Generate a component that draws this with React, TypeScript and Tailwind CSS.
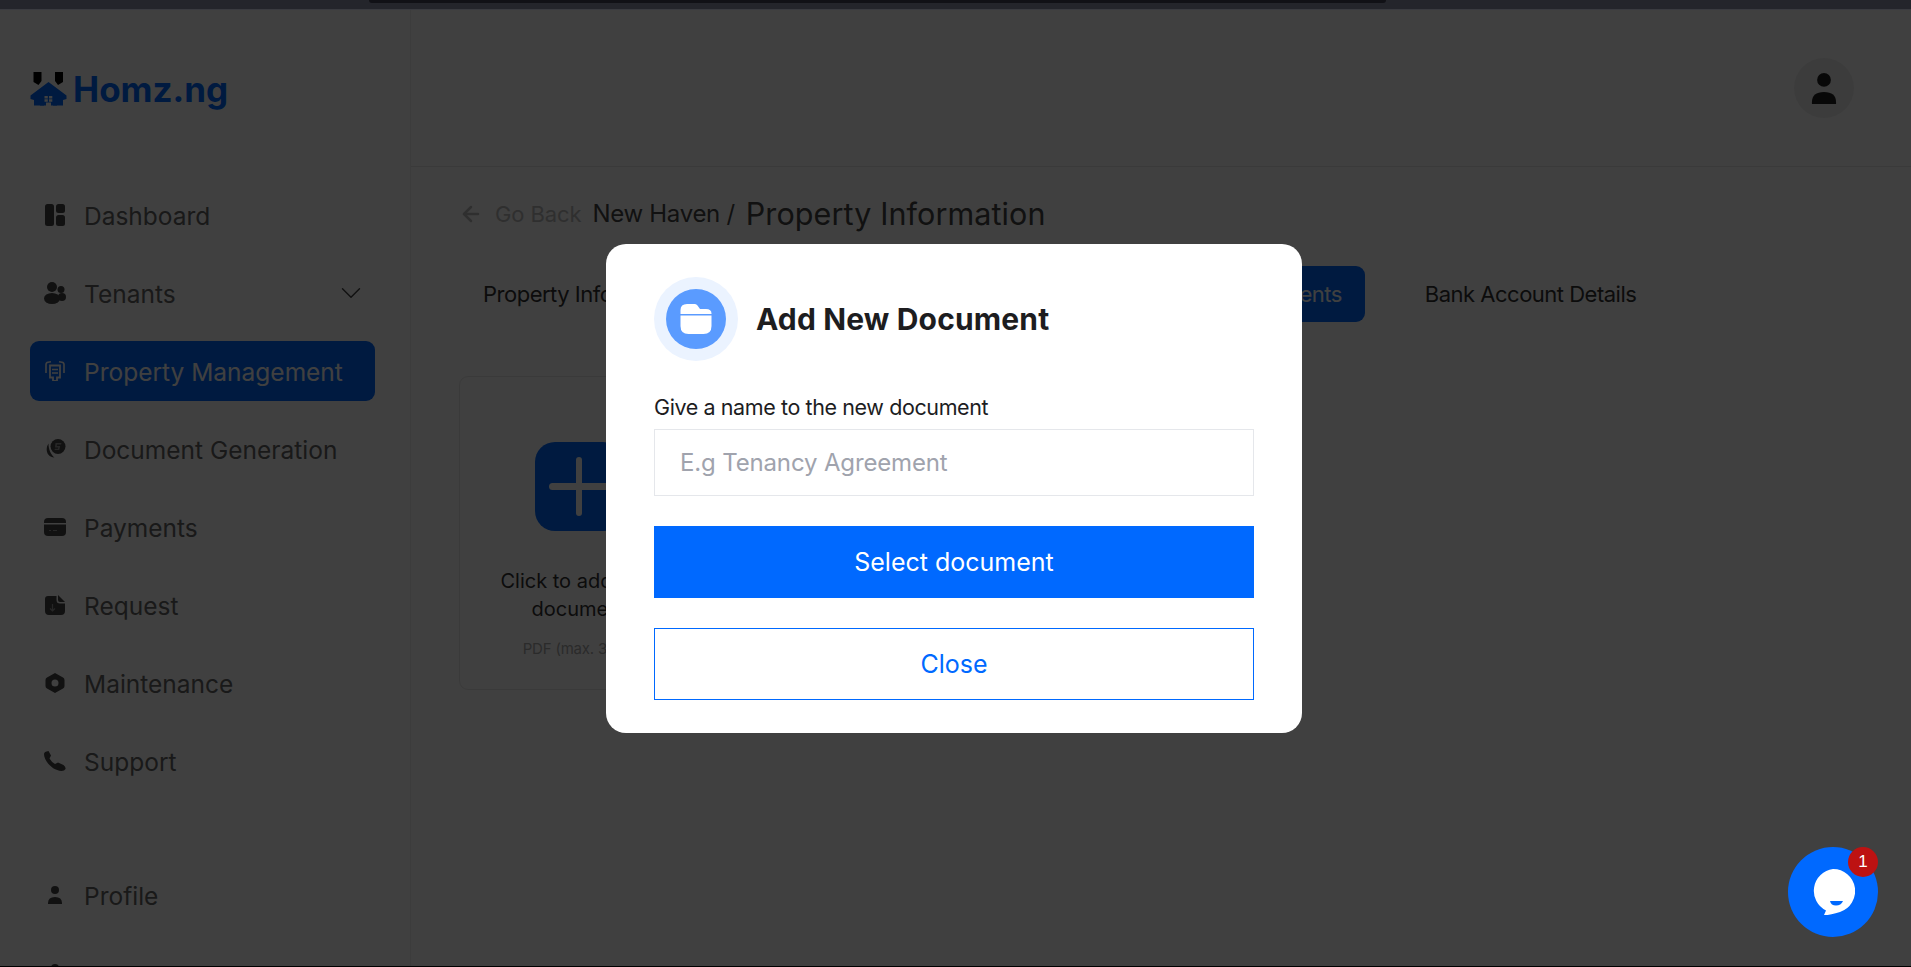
import { ArrowLeft, ChevronDown } from "lucide-react";

const Logo = () => (
  <svg width="37" height="34" viewBox="0 0 37 34">
    <path d="M3.500 0h8v9l-3 4-5-3zM33 0h-8v9l3 4 5-3z" fill="#000" />
    <path d="M18.500 10 0.500 23.500v3.500l3.500 1v5.500h10v-8h9v8h10V28l3.500-1v-3.500z" fill="#0069ff" />
    <path d="M10 33.500V23l8.500-7 8.500 7v10.500h-6v-3H16v3z" fill="#0069ff" />
    <path d="M14.500 24h3.300v2.500h-3.300zM19 24h3.300v2.500H19zM14.500 27.300h3.300v2.500h-3.300zM19 27.300h3.300v2.500H19z" fill="#fff" />
  </svg>
);

const DashIcon = () => (
  <svg width="20" height="22" viewBox="0 0 20 22" fill="#444">
    <rect x="0" y="0" width="9" height="22" rx="2.500" />
    <rect x="11" y="0" width="9" height="9" rx="2.500" />
    <rect x="11" y="11" width="9" height="11" rx="2.500" />
  </svg>
);

const TenantsIcon = () => (
  <svg width="22" height="22" viewBox="0 0 22 22" fill="#444">
    <circle cx="8" cy="5" r="5" />
    <circle cx="17" cy="7.500" r="3.500" />
    <ellipse cx="18" cy="15" rx="4" ry="4" />
    <ellipse cx="8" cy="16.500" rx="8" ry="5.500" />
  </svg>
);

const PropertyIcon = () => (
  <svg width="20" height="20" viewBox="0 0 20 20" fill="none" stroke="#fff" strokeWidth="1.600">
    <path d="M1 12V3.500Q1 1.500 3 1.200L6 .8M19 12V3.500Q19 1.500 17 1.200L14 .8" />
    <path d="M5 4.500h10v12h-3V20H8v-3.500H5z" strokeWidth="1.800" />
    <path d="M7 8.500h6M7 12h6" strokeWidth="1.500" />
  </svg>
);

const DocGenIcon = () => (
  <svg width="20" height="20" viewBox="0 0 20 20" fill="#444" className="translate-x-[1px]">
    <circle cx="12" cy="7.500" r="7.500" />
    <path d="M9.500 4h6l-.5 1.500h-4l-.3 1.500h3.500l-1 4H8.500l.4-1.300h3l.3-1.300H9z" fill="#999" />
    <path d="M2.500 4.500C0 8 .2 13 2.500 15.800c1.500 1.800 3.500 2.700 6 2.700C5 16 2.500 10.500 2.500 4.500z" />
  </svg>
);

const PaymentIcon = () => (
  <svg width="22" height="18" viewBox="0 0 22 18" fill="#444">
    <path d="M4 0h14q4 0 4 4v1H0V4q0-4 4-4z" />
    <path d="M0 6.500h22V14q0 4-4 4H4q-4 0-4-4z" />
    <path d="M5 12.500h2M9 12.500h4" stroke="#999" strokeWidth="1" />
  </svg>
);

const RequestIcon = () => (
  <svg width="20" height="20" viewBox="0 0 20 20" fill="#444">
    <path d="M3 1h8.500v4q0 3.500 3.500 3.500h5V16q0 4-4 4H4q-4 0-4-4V4q0-3 3-3z" />
    <path d="M13 0l7 7h-5q-2 0-2-2z" />
    <path d="M7.500 9v7M5 13.500l2.500 2.500 2.500-2.500" stroke="#999" strokeWidth="1.200" fill="none" />
  </svg>
);

const MaintenanceIcon = () => (
  <svg width="20" height="20" viewBox="0 0 20 20" fill="#444">
    <path fillRule="evenodd" d="M10 0l8 4.500q1.500.8 1.500 2.500v6q0 1.700-1.500 2.500L10 20l-8-4.500Q.5 14.700.5 13V7q0-1.700 1.500-2.500zM10 6.500a3.500 3.500 0 1 0 0 7 3.500 3.500 0 0 0 0-7z" />
  </svg>
);

const PhoneIcon = () => (
  <svg width="22" height="20" viewBox="0 0 22 20" fill="#444">
    <path d="M4.500 0 7 4.500 5.500 7.500q2 3.500 5.500 5.500l3-1.500 5.500 2.500q2.500 2 2 4-1 2-4 2C8.500 19.500 0 10 0 3q0-2.500 4.500-3z" />
  </svg>
);

const PersonIcon = ({ color = "#444", w = 14, h = 18 }: { color?: string; w?: number; h?: number }) => (
  <svg width={w} height={h} viewBox="0 0 14 18" fill={color}>
    <circle cx="7" cy="4" r="4" />
    <path d="M0 18v-1q0-6 7-6t7 6v1z" />
  </svg>
);

const FolderIcon = () => (
  <svg width="32" height="32" viewBox="0 0 32 32">
    <path d="M7 1h8q1.500 0 2.500 1.500L20 6h6q5.500 0 5.500 4.500v.5H.5V7q0-6 6.500-6z" fill="#fff" />
    <path d="M.5 12.500h31V23q0 8-8 8h-15q-8 0-8-8z" fill="#fff" />
  </svg>
);

const navTop = [
  { label: "Dashboard", icon: <DashIcon /> },
  { label: "Tenants", icon: <TenantsIcon />, chevron: true },
  { label: "Property Management", icon: <PropertyIcon />, active: true },
  { label: "Document Generation", icon: <DocGenIcon /> },
  { label: "Payments", icon: <PaymentIcon /> },
  { label: "Request", icon: <RequestIcon /> },
  { label: "Maintenance", icon: <MaintenanceIcon /> },
  { label: "Support", icon: <PhoneIcon /> },
];

const NavItem = ({ label, icon, active, chevron }: { label: string; icon: React.ReactNode; active?: boolean; chevron?: boolean }) => (
  <div className={`flex h-[60px] items-center rounded-[9px] pl-[14px] pr-[7px] text-[24.5px] ${active ? "bg-[#0069ff] text-white" : "text-[#666]"}`}>
    <span className="flex w-[22px] shrink-0 justify-center">{icon}</span>
    <span className="ml-[18px] flex-1 whitespace-nowrap pt-[2px]">{label}</span>
    {chevron && <ChevronDown className="h-[34px] w-[34px] text-[#444]" strokeWidth={1} />}
  </div>
);

const App = () => {
  return (
    <div className="relative flex h-[967px] flex-col overflow-hidden bg-white font-['Inter',sans-serif]">
      <div className="h-[10px] shrink-0 border-b border-[#3a3b40] bg-[#24252b] pl-[369px]">
        <div className="h-[3px] w-[1017px] rounded-b-md bg-[#111116]" />
      </div>

      <div className="flex min-h-0 flex-1">
        {/* sidebar */}
        <aside className="w-[411px] shrink-0 border-r border-[#f0f0f0] pl-[30px]">
          <div className="flex h-[155px] items-center pt-[3px]">
            <Logo />
            <span className="ml-[6px] text-[35px] font-bold leading-none text-[#0069ff]">Homz.ng</span>
          </div>
          <nav className="flex w-[345px] flex-col gap-[18px] pt-[20px]">
            {navTop.map((item) => (
              <NavItem key={item.label} {...item} />
            ))}
            <div className="mt-[56px] flex flex-col gap-[18px]">
              <NavItem label="Profile" icon={<PersonIcon />} />
              {/* next row only peeks in at the fold, its label is below it */}
              <NavItem label="" icon={<PersonIcon />} />
            </div>
          </nav>
        </aside>

        {/* main */}
        <main className="min-w-0 flex-1">
          <div className="flex h-[157px] items-start justify-end border-b border-[#e8e8e8] pr-[57px] pt-[48px]">
            <div className="flex h-[60px] w-[60px] items-center justify-center rounded-full bg-[#f0f0f0]">
              <PersonIcon color="#222" w={28} h={31} />
            </div>
          </div>

          <div className="pl-[48px]">
            <div className="flex h-[78px] items-center pt-[16px]">
              <ArrowLeft className="h-[24px] w-[24px] text-[#bbb]" strokeWidth={2.500} />
              <span className="ml-[12px] text-[22px] tracking-[-0.1px] text-[#bbb]">Go Back</span>
              <span className="ml-[11px] text-[24px] tracking-[-0.3px] text-[#444]">New Haven /</span>
              <span className="ml-[11px] text-[30.5px] tracking-[0.1px] text-[#444]">Property Information</span>
            </div>

            <div className="mt-[21px] flex h-[56px] items-center text-[22px] tracking-[-0.5px] text-[#333]">
              <span className="ml-[24px] whitespace-nowrap">Property Information</span>
              <div className="ml-[377px] flex h-[56px] w-[300px] items-center justify-end rounded-[9px] bg-[#0069ff] pr-[23px] text-white">
                Documents
              </div>
              <span className="ml-[60px] whitespace-nowrap">Bank Account Details</span>
            </div>

            <div className="mt-[54px] flex h-[314px] w-[240px] flex-col items-center rounded-[9px] border border-[#e8e8e8] pt-[65px]">
              <div className="relative flex h-[89px] w-[88px] items-center justify-center rounded-[20px] bg-[#0069ff]">
                <span className="absolute h-[59px] w-[6px] rounded bg-white" />
                <span className="absolute h-[7px] w-[60px] rounded bg-white" />
              </div>
              <p className="mt-[36px] text-center text-[20px] leading-[28px] text-[#333]">
                Click to add new
                <br />
                document
              </p>
              <p className="mt-[15px] text-[15px] tracking-[-0.2px] text-[#aaa]">PDF (max. 3MB)</p>
            </div>
          </div>
        </main>
      </div>

      <div className="h-px shrink-0 bg-black" />

      {/* dim layer and dialog */}
      <div className="absolute inset-x-0 bottom-[1px] top-[10px] flex items-center justify-center bg-black/75">
        <div className="mr-[3px] mt-[1px] w-[696px] rounded-[20px] bg-white px-[48px] pb-[33px] pt-[33px]">
          <div className="flex items-center">
            <div className="flex h-[84px] w-[84px] items-center justify-center rounded-full bg-[#ebf3ff]">
              <div className="flex h-[60px] w-[60px] items-center justify-center rounded-full bg-[#5a9bff]">
                <FolderIcon />
              </div>
            </div>
            <h2 className="ml-[18px] text-[30px] font-bold tracking-[0.15px] text-[#1d1d1f]">Add New Document</h2>
          </div>

          <label className="mt-[32px] block text-[21.500px] leading-[28px] tracking-[-0.4px] text-[#1d1d1f]">Give a name to the new document</label>
          <input
            className="mt-[8px] block h-[67px] w-full border border-[#e5e7eb] px-[25px] text-[24px] tracking-[-0.15px] outline-none placeholder:text-[#a0a3ad]"
            placeholder="E.g Tenancy Agreement"
          />
          <button className="mt-[30px] block h-[72px] w-full bg-[#0069ff] pt-[1px] text-[25px] text-white">Select document</button>
          <button className="mt-[30px] block h-[72px] w-full border border-[#0069ff] pt-[1px] text-[25px] text-[#0069ff]">Close</button>
        </div>
      </div>

      {/* chat launcher */}
      <div className="absolute bottom-[30px] right-[33px] flex h-[90px] w-[90px] items-center justify-center rounded-full bg-[#0069ff]">
        <svg width="44" height="46" viewBox="0 0 44 46">
          <path d="M22 0a22 22 0 0 1 7 42.900Q20 46 13 46l2-4.500A22 22 0 0 1 22 0z" fill="#fff" />
          <path d="M19 32q7 0 13 0-2 4.500-7 4.500T19 32z" fill="#0069ff" />
        </svg>
        <span className="absolute right-0 top-0 flex h-[30px] w-[30px] items-center justify-center rounded-full bg-[#bd1212] font-['Liberation_Sans',sans-serif] text-[17px] text-white">
          1
        </span>
      </div>
    </div>
  );
};

export default App;
